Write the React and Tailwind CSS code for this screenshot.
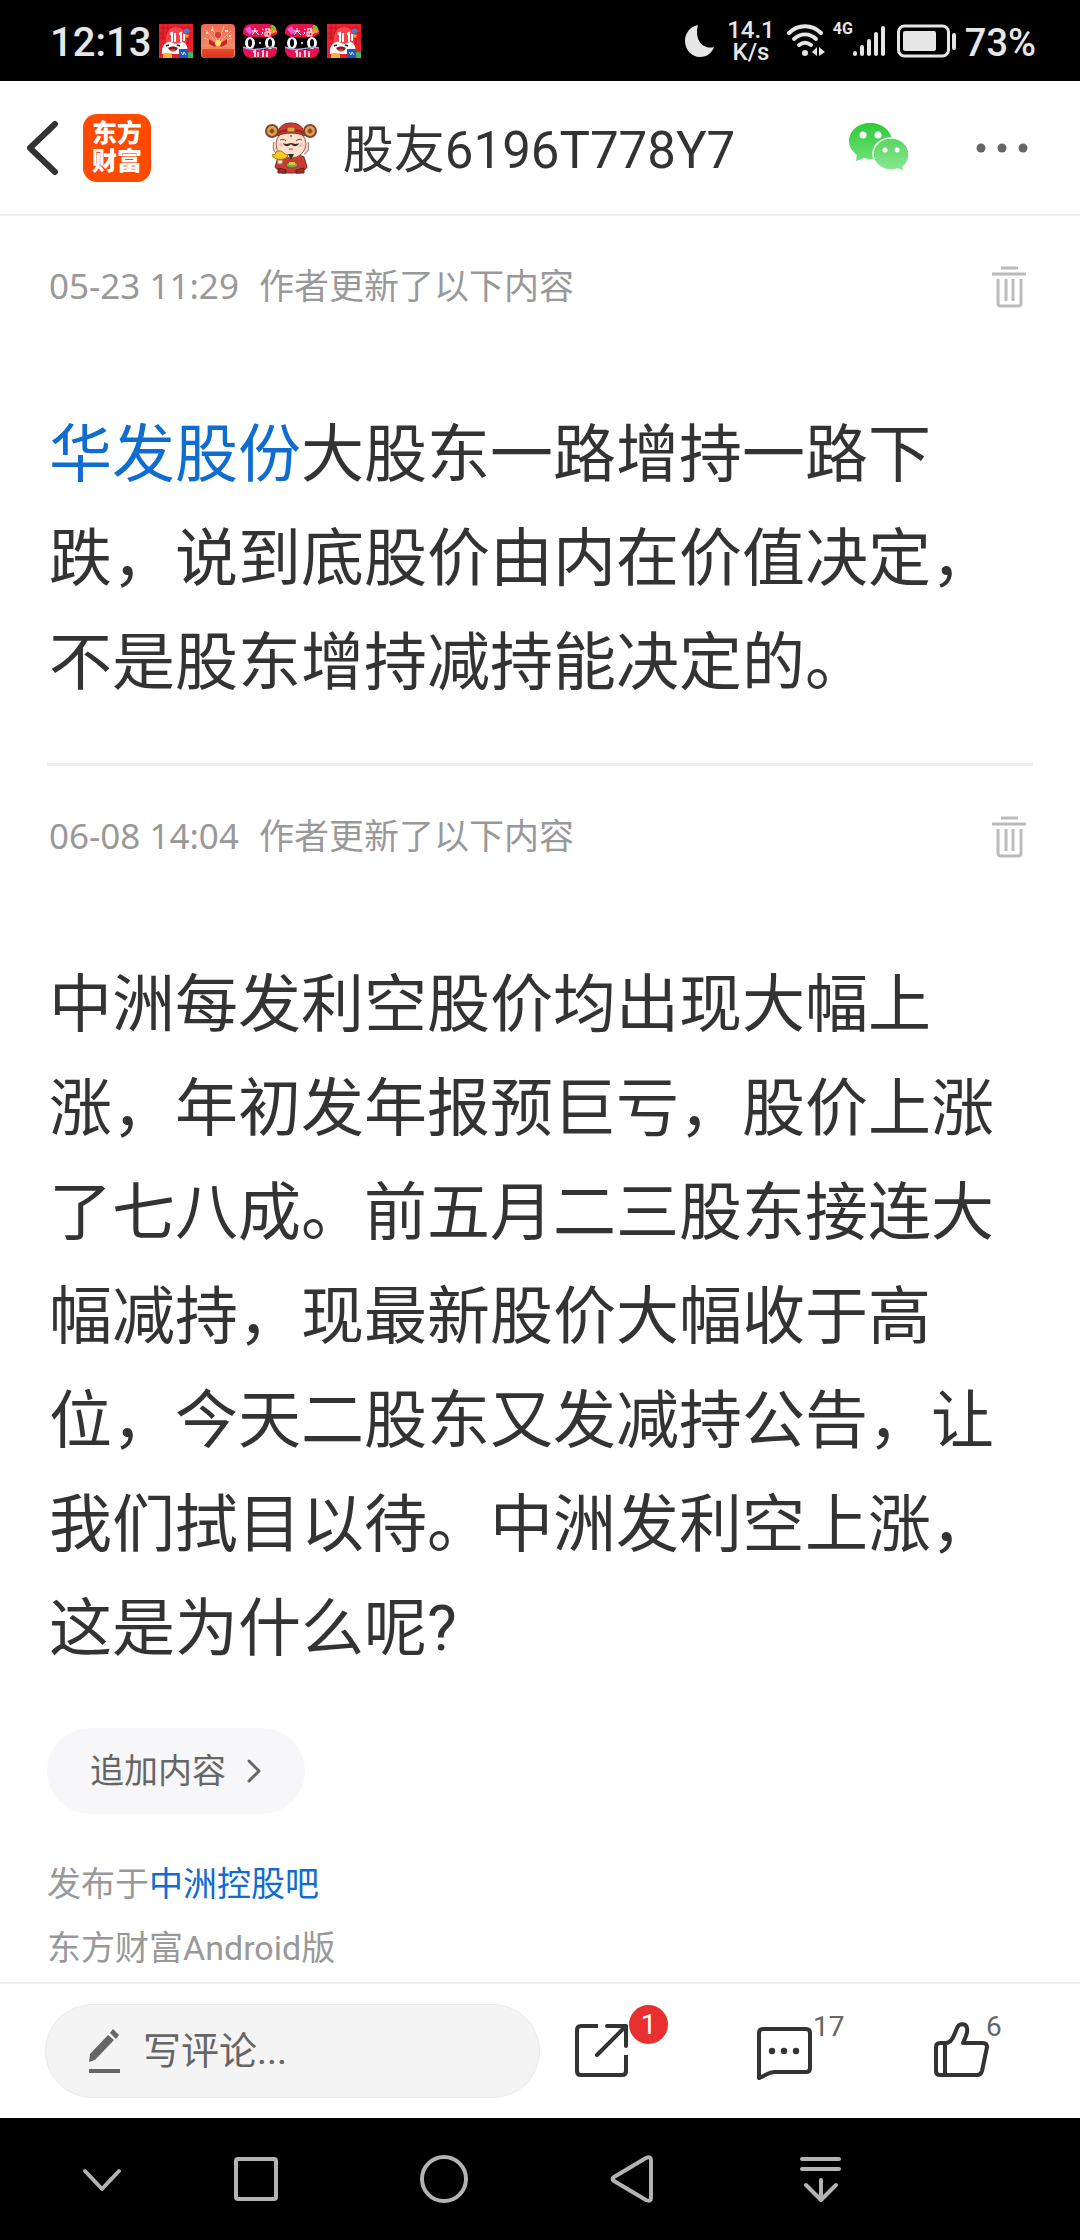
// App.jsx

import React from "react";

const SaleIcon = () => (
  <svg viewBox="0 0 34 34" className="size-[34px]">
    <rect width="34" height="34" fill="#e8202c" />
    <path d="M0 4h34M0 9h34M0 14h34M4 0v16M9 0v16M29 0v20" stroke="#c5141f" strokeWidth="1" />
    <path d="M7 20C6 8 11 3 17 3s11 5 10 17z" fill="#f0454d" />
    <path d="M24 6l5-2 2 4-4 2z" fill="#4a7fd0" />
    <path d="M26 10l4 1-1 3-3-1z" fill="#f2a03a" />
    <path d="M3 30c-1-9 5-13 9-12l5 2 6-2c5 1 6 6 6 12z" fill="#fff" />
    <path d="M11 10l2-1v9M16 9v9M20 10l2-1v9M25 10v7" stroke="#fff" strokeWidth="2" fill="none" />
    <path d="M7 22l3-1M18 21l3 1" stroke="#222" strokeWidth="1.5" />
    <path d="M9 24c3-2 7-2 10 0-2 4-7 5-10 0z" fill="#8c1a1d" />
    <path d="M11 26c2-1 4-1 6 0-2 2-4 2-6 0z" fill="#f0454d" />
    <path d="M4 29h9v5H4z" fill="#f5b82e" />
    <path d="M20 25h9v9h-9z" fill="#1f57c3" />
    <path d="M22 28l2 3 1-3 2 3" stroke="#cfe0ff" strokeWidth="1" fill="none" />
    <path d="M29 28h5v6h-5z" fill="#45b35a" />
  </svg>
);

const GiftIcon = () => (
  <svg viewBox="0 0 34 34" className="size-[34px]">
    <defs>
      <linearGradient id="giftTop" x1="0" y1="0" x2="0" y2="1">
        <stop offset="0" stopColor="#ee6a52" />
        <stop offset="1" stopColor="#f79a76" />
      </linearGradient>
      <linearGradient id="giftBox" x1="0" y1="0" x2="0" y2="1">
        <stop offset="0" stopColor="#f2502f" />
        <stop offset="1" stopColor="#d8321c" />
      </linearGradient>
    </defs>
    <rect width="34" height="34" rx="4" fill="url(#giftTop)" />
    <path d="M17 20L5 6M17 20L11 2M17 20L23 2M17 20L30 7M17 20L3 14M17 20L31 14" stroke="#fbb48c" strokeWidth="1" />
    <path d="M8 15l8 5-2 3-6-3zM26 15l-8 5 2 3 6-3z" fill="#c5281b" />
    <circle cx="17" cy="11" r="3" fill="#d93a2a" />
    <circle cx="17" cy="19" r="3" fill="#ffe06a" />
    <path d="M5 8h2v2H5zM24 6h3v2h-3zM28 11h2v2h-2zM10 5h2v2h-2z" fill="#ffe3b5" />
    <path d="M1 23h32v7a4 4 0 0 1-4 4H5a4 4 0 0 1-4-4z" fill="url(#giftBox)" />
    <path d="M1 23h32v2H1z" fill="#f9805a" />
  </svg>
);

const TmallIcon = () => (
  <svg viewBox="0 0 34 34" className="size-[34px]">
    <defs>
      <clipPath id="catClip">
        <rect width="34" height="34" rx="8" />
      </clipPath>
    </defs>
    <g clipPath="url(#catClip)">
      <rect width="34" height="34" fill="#e8114f" />
      <path d="M0 10l6 3h22l6-3v14c-8 0-11 2-17 2S8 23 0 23z" fill="#000" />
      <path d="M2 5l5-3 3 7-4 1z" fill="#e45be0" />
      <path d="M24 8l7-6 3 6-6 2z" fill="#f39a2b" />
      <path d="M27 2l4-2 3 5-4 1z" fill="#6cc230" />
      <path d="M9 7h6M12 4v3l-3 4M12 7l4 4M19 5l2 1M19 8l1 1M18 11l2-2M22 5h5M23 4v3M26 4v3M22 8h5v4h-5zM24 8v4" stroke="#fff" strokeWidth="1" fill="none" />
      <ellipse cx="7" cy="19" rx="5" ry="6" fill="#fff" />
      <ellipse cx="27" cy="19" rx="5" ry="6" fill="#fff" />
      <ellipse cx="7" cy="19" rx="2" ry="4" fill="#000" />
      <ellipse cx="27" cy="19" rx="2" ry="4" fill="#000" />
      <circle cx="17" cy="19" r="1" fill="#fff" />
      <path d="M0 23c5 3 10 3 17 2s12-3 17-1" stroke="#8fb4ee" strokeWidth="1.5" fill="none" />
      <path d="M10 28l2-1v6M15 28v5M19 28l1-1v6M24 27v6" stroke="#fff" strokeWidth="1.5" fill="none" />
    </g>
  </svg>
);

const Mascot = () => (
  <svg viewBox="0 0 52 52" className="size-[52px]">
    <path d="M9 20c-2 6 0 11 4 12M43 20c2 6 0 11-4 12" fill="#f6d2bd" stroke="#a07260" />
    <path d="M13 35c4-3 22-3 26 0l3 10c-1 3-4 3-6 3l-1 3H17l-1-3c-3 0-5-1-6-3z" fill="#cc3b31" stroke="#7c2a22" />
    <path d="M13 46l8 2v3h-8zM39 46l-8 2v3h8z" fill="#a52a24" stroke="#5c201c" />
    <ellipse cx="26" cy="22" rx="15" ry="14" fill="#fce0cd" stroke="#8a5b4b" />
    <path d="M12 14C13 5 18 1 26 1s13 4 14 13c-8-4-20-4-28 0z" fill="#cf3b33" stroke="#7c2a22" />
    <path d="M13 11c7-4 19-4 26 0" stroke="#8b2620" strokeWidth="2" fill="none" />
    <rect x="22" y="5" width="8" height="5" rx="1" fill="#e3a53c" stroke="#7c4a1c" />
    <circle cx="7" cy="9" r="6" fill="#e8a04b" stroke="#7b4a37" strokeWidth="2" />
    <circle cx="45" cy="9" r="6" fill="#e8a04b" stroke="#7b4a37" strokeWidth="2" />
    <path d="M7 6l3 3-3 3-3-3zM45 6l3 3-3 3-3-3z" fill="#8a5126" />
    <path d="M15 18c2-1 4-1 6 1M31 19c2-2 4-2 6-1" stroke="#6b4a41" fill="none" />
    <circle cx="26" cy="14" r="1" fill="#d13a30" />
    <circle cx="16" cy="23" r="2" fill="#f7c4b4" />
    <circle cx="36" cy="23" r="2" fill="#f7c4b4" />
    <path d="M26 21c-3 0-4 2-8 0 1 4 6 4 8 1 2 3 7 3 8-1-4 2-5 0-8 0z" fill="#3b2b29" />
    <path d="M24 27h4" stroke="#b04a3c" />
    <path d="M23 32h6l-3 6z" fill="#33302f" />
    <ellipse cx="27" cy="43" rx="6" ry="3" fill="#6fae52" stroke="#7c4a1c" />
    <rect x="24" y="40" width="6" height="3" fill="#efc03c" />
    <path d="M7 33c2-1 3 1 4-3 3-2 6-1 8 1 1 2 2 1 4 2-1 6-14 6-16 0z" fill="#f6cb1d" stroke="#9a7312" />
    <path d="M12 38h6l-1 4h-4z" fill="#fce0cd" stroke="#a07260" />
  </svg>
);

const WeChat = () => (
  <svg viewBox="0 0 60 50" className="h-[50px] w-[60px]">
    <defs>
      <linearGradient id="wxBig" x1="0" y1="0" x2="0" y2="1">
        <stop offset="0" stopColor="#2fca37" />
        <stop offset="1" stopColor="#6fe07a" />
      </linearGradient>
      <linearGradient id="wxSmall" x1="0" y1="0" x2="0" y2="1">
        <stop offset="0" stopColor="#5ad562" />
        <stop offset="1" stopColor="#8be895" />
      </linearGradient>
    </defs>
    <path d="M21 0C9 0 0 8 0 18c0 6 3 10 8 14l-1 6 8-3c3 1 6 1 10 1 10 0 18-8 18-18S33 0 21 0z" fill="url(#wxBig)" />
    <path d="M42 15c-10 0-18 7-18 16s8 16 18 16c3 0 5 0 7-1l6 3-1-5c4-3 6-7 6-13 0-9-8-16-18-16z" fill="url(#wxSmall)" stroke="#fff" strokeWidth="1.5" />
    <circle cx="14" cy="12" r="3.5" fill="#fff" />
    <circle cx="29" cy="12" r="3.5" fill="#fff" />
    <circle cx="36" cy="27" r="2.5" fill="#fff" />
    <circle cx="48" cy="27" r="2.5" fill="#fff" />
  </svg>
);

const StatusBar = () => (
  <div className="flex h-[81px] items-center justify-between bg-black pr-[44px] pl-[50px] text-[#e6e6e6]">
    <div className="flex items-center gap-2">
      <span className="pt-1 text-[40px] leading-none font-medium">12:13</span>
      <SaleIcon />
      <GiftIcon />
      <TmallIcon />
      <TmallIcon />
      <SaleIcon />
    </div>

    <div className="flex items-center">
      <svg viewBox="0 0 30 32" className="mr-3 h-[32px] w-[30px]">
        <path d="M13 0C4 2 0 9 0 16c0 9 7 16 15 16 7 0 12-4 14-10C18 25 9 15 13 0z" fill="#e6e6e6" />
      </svg>
      <div className="mr-3 flex flex-col items-center text-[24px] leading-[22px] font-medium">
        <span>14.1</span>
        <span>K/s</span>
      </div>
      <svg viewBox="0 0 38 34" className="mr-2 h-[34px] w-[38px]" fill="none" stroke="#e6e6e6" strokeWidth="4" strokeLinecap="round">
        <path d="M2 9C11 0 25 0 34 9" />
        <path d="M7 15c7-6 15-6 22 0" />
        <path d="M12 21c4-3 8-3 12 0" />
        <circle cx="18" cy="29" r="3" fill="#e6e6e6" stroke="none" />
        <path d="M30 23v9l-5-4zM32 23v9l6-4z" fill="#e6e6e6" stroke="none" />
      </svg>
      <span className="self-start text-[16px] leading-[20px] font-bold">4G</span>
      <svg viewBox="0 0 32 32" className="mr-3 h-[32px] w-[32px]" stroke="#e6e6e6" strokeWidth="4" strokeLinecap="round">
        <path d="M2 28v1M9 22v7M16 16v13M23 9v20M30 3v26" />
      </svg>
      <svg viewBox="0 0 60 34" className="mr-2 h-[34px] w-[60px]">
        <rect x="1.5" y="2" width="50" height="30" rx="6" fill="none" stroke="#e6e6e6" strokeWidth="3" />
        <rect x="6" y="7" width="33" height="20" rx="2" fill="#e6e6e6" />
        <rect x="55" y="9" width="4" height="17" rx="2" fill="#e6e6e6" />
      </svg>
      <span className="pt-1 text-[38px] leading-none font-medium">73%</span>
    </div>
  </div>
);

const Header = () => (
  <header className="flex h-[135px] items-center justify-between border-b-2 border-[#eeeeee] pr-[51px] pl-[26px]">
    <div className="flex items-center gap-6">
      <button aria-label="返回">
        <svg viewBox="0 0 33 56" className="h-[56px] w-[33px]" fill="none" stroke="#333" strokeWidth="6" strokeLinecap="round" strokeLinejoin="round">
          <path d="M29 4L4 28l25 24" />
        </svg>
      </button>
      <div className="flex size-[68px] flex-col items-center justify-center rounded-[14px] bg-[#ff4a00] text-[25px] leading-[28px] font-black text-white">
        <span>东方</span>
        <span>财富</span>
      </div>
    </div>

    <div className="flex items-center gap-[26px]">
      <Mascot />
      <h1 className="pt-1.5 text-[51px] leading-[64px] text-[#333]">股友6196T778Y7</h1>
    </div>

    <div className="flex items-center gap-[66px]">
      <button aria-label="微信">
        <WeChat />
      </button>
      <button aria-label="更多">
        <svg viewBox="0 0 54 10" className="h-[10px] w-[54px]" fill="#666">
          <circle cx="6" cy="5" r="4.5" />
          <circle cx="27" cy="5" r="4.5" />
          <circle cx="48" cy="5" r="4.5" />
        </svg>
      </button>
    </div>
  </header>
);

const Update = ({ time, children }) => (
  <section className="pt-[46px] pl-[2px]">
    <div className="flex h-[50px] items-center justify-between pr-[7px] text-[35px] text-[#999]">
      <p className="flex items-baseline gap-5">
        <time className="font-['Noto_Sans',sans-serif]">{time}</time>
        <span>作者更新了以下内容</span>
      </p>
      <button aria-label="删除">
        <svg viewBox="0 0 34 42" className="h-[42px] w-[34px]" fill="none" stroke="#bbb" strokeWidth="3">
          <path d="M9 2h17M0 8h34M6 13v24q0 3 3 3h17q3 0 3-3V13M14 13v22M21 13v22" />
        </svg>
      </button>
    </div>
    <p className="mt-[91px] text-[63px] leading-[104px] text-[#333]">{children}</p>
  </section>
);

const ActionBar = () => (
  <footer className="grid h-[136px] grid-cols-2 items-center border-t-2 border-[#eeeeee]">
    <label className="ml-[45px] flex h-[94px] items-center gap-[22px] rounded-full border border-[#eaeaea] bg-[#f4f4f4] pl-[42px] text-[#666]">
      <svg viewBox="0 0 33 46" className="h-[46px] w-[33px] shrink-0" fill="#666">
        <path d="M1 34l1-8L20 7l6 5L7 32zM22 5l3-4 6 6-3 4zM1 41h31v4H1z" />
      </svg>
      <input
        aria-label="写评论"
        placeholder="写评论..."
        className="w-full min-w-0 bg-transparent text-[38px] outline-none placeholder:text-[#666]"
      />
    </label>

    <div className="grid grid-cols-3 text-[28px] leading-none text-[#666]">
      <button aria-label="分享" className="relative flex pl-[34px]">
        <svg viewBox="0 0 56 60" className="h-[60px] w-[56px]" fill="none" stroke="#333" strokeWidth="4" strokeLinejoin="round">
          <path d="M24 5H7q-4 0-4 4v41q0 4 4 4h41q4 0 4-4V34" />
          <path d="M33 5h19v20M52 5L23 34" strokeLinecap="round" />
        </svg>
        <span className="absolute -top-4 left-[89px] flex size-[39px] items-center justify-center rounded-full bg-[#e93030] text-white">
          1
        </span>
      </button>
      <button aria-label="评论" className="flex pl-[36px]">
        <svg viewBox="0 0 57 60" className="h-[60px] w-[57px]" fill="none" stroke="#333" strokeWidth="4" strokeLinejoin="round">
          <path d="M7 8h43q4 0 4 4v35q0 4-4 4H19C11 51 8 56 3 57V12q0-4 4-4z" />
          <g fill="#333" stroke="none">
            <circle cx="16" cy="30" r="3.2" />
            <circle cx="28" cy="30" r="3.2" />
            <circle cx="40" cy="30" r="3.2" />
          </g>
        </svg>
        <span className="-mt-2">17</span>
      </button>
      <button aria-label="点赞" className="flex pl-[33px]">
        <svg viewBox="0 0 57 60" className="h-[60px] w-[57px]" fill="none" stroke="#333" strokeWidth="4" strokeLinejoin="round">
          <path d="M13 22H7q-4 0-4 4v24q0 4 4 4h37q4 0 5-4l5-24q0-4-4-4H30c3-6 5-11 4-15-1-5-8-5-10 0-3 7-5 15-11 15zM12 22v32" />
        </svg>
        <span className="-ml-1 -mt-2">6</span>
      </button>
    </div>
  </footer>
);

const NavBar = () => (
  <nav className="grid h-[122px] grid-cols-[162fr_188fr_188fr_188fr_188fr_166fr] items-center justify-items-center bg-black">
    <button aria-label="收起" className="pl-10">
      <svg viewBox="0 0 48 50" className="h-[50px] w-[48px]" fill="none" stroke="#b3b3b3" strokeWidth="4" strokeLinecap="round" strokeLinejoin="round">
        <path d="M8 17l17 18 17-18" />
      </svg>
    </button>
    <button aria-label="最近任务">
      <svg viewBox="0 0 48 50" className="h-[50px] w-[48px]" fill="none" stroke="#b3b3b3" strokeWidth="4">
        <rect x="4" y="5" width="40" height="40" rx="2" />
      </svg>
    </button>
    <button aria-label="主页">
      <svg viewBox="0 0 48 50" className="h-[50px] w-[48px]" fill="none" stroke="#b3b3b3" strokeWidth="4">
        <circle cx="24" cy="25" r="22" />
      </svg>
    </button>
    <button aria-label="后退">
      <svg viewBox="0 0 48 50" className="h-[50px] w-[48px]" fill="none" stroke="#b3b3b3" strokeWidth="4" strokeLinejoin="round">
        <path d="M6 23L38 4q5-2 5 2v38q0 4-5 2L6 27q-3-2 0-4z" />
      </svg>
    </button>
    <button aria-label="下拉通知">
      <svg viewBox="0 0 48 50" className="h-[50px] w-[48px]" fill="none" stroke="#b3b3b3" strokeWidth="4" strokeLinecap="round" strokeLinejoin="round">
        <path d="M6 5h37M6 15h37M25 26v20M10 31l15 15 15-15" />
      </svg>
    </button>
  </nav>
);

const App = () => {
  return (
    <div
      lang="zh-CN"
      className="flex min-h-screen flex-col bg-white font-['Roboto','Noto_Sans_CJK_SC',sans-serif]"
    >
      <StatusBar />
      <Header />

      <main className="flex-1 px-[47px]">
        <div className="border-b-3 border-[#ededed] pb-[48px]">
          <Update time="05-23 11:29">
            <a href="#stock" className="text-[#0f6cd0]">
              华发股份
            </a>
            大股东一路增持一路下跌，说到底股价由内在价值决定，不是股东增持减持能决定的。
          </Update>
        </div>

        <Update time="06-08 14:04">
          中洲每发利空股价均出现大幅上涨，年初发年报预巨亏，股价上涨了七八成。前五月二三股东接连大幅减持，现最新股价大幅收于高位，今天二股东又发减持公告，让我们拭目以待。中洲发利空上涨，这是为什么呢?
        </Update>

        <button className="mt-[47px] flex h-[86px] items-center gap-5 rounded-full bg-[#f7f7fa] px-[43px] text-[34px] text-[#666]">
          追加内容
          <svg viewBox="0 0 16 24" className="h-[24px] w-[16px]" fill="none" stroke="#666" strokeWidth="3" strokeLinecap="round" strokeLinejoin="round">
            <path d="M3 2l10 10L3 22" />
          </svg>
        </button>

        <div className="mt-[38px] text-[34px] leading-[64px] text-[#999]">
          <p>
            发布于
            <a href="#bar" className="text-[#0f6cd0]">
              中洲控股吧
            </a>
          </p>
          <p>东方财富Android版</p>
        </div>
      </main>

      <ActionBar />
      <NavBar />
    </div>
  );
};

export default App;
